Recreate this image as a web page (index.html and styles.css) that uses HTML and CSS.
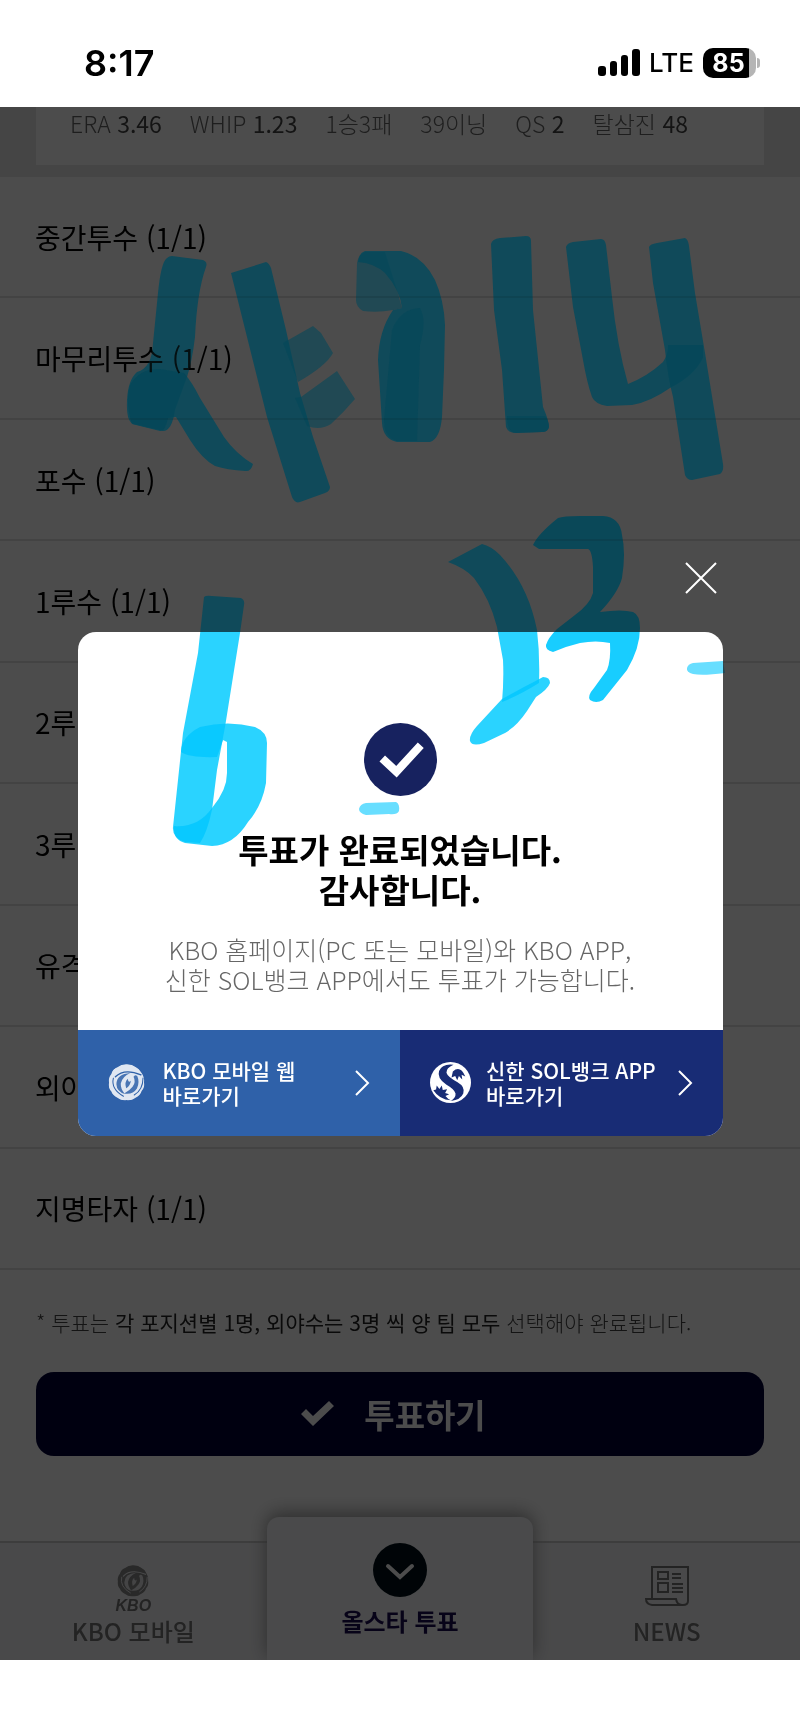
FILE: index.html
```html
<!DOCTYPE html>
<html lang="ko">

<head>
    <meta charset="utf-8">
    <meta name="viewport" content="width=device-width, initial-scale=1">
    <title>올스타 투표</title>
    <link rel="stylesheet" href="styles.css">
</head>

<body>
    <div class="phone">
        <header class="status">
            <span class="clock">8:17</span>
            <div class="status-right">
                <svg class="signal" viewBox="0 0 42 28" aria-hidden="true">
                    <rect x="0" y="17" width="8" height="10" rx="3" />
                    <rect x="12" y="12" width="7" height="15" rx="3" />
                    <rect x="23" y="6" width="7" height="21" rx="3" />
                    <rect x="34" y="0" width="8" height="27" rx="3" />
                </svg>
                <span class="network">LTE</span>
                <span class="battery">85</span>
            </div>
        </header>

        <main class="screen">
            <section class="stats">
                <ul class="stats-box">
                    <li>ERA <b>3.46</b></li>
                    <li>WHIP <b>1.23</b></li>
                    <li>1승3패</li>
                    <li>39이닝</li>
                    <li>QS <b>2</b></li>
                    <li>탈삼진 <b>48</b></li>
                </ul>
            </section>

            <ul class="positions">
                <li>중간투수 (1/1)</li>
                <li>마무리투수 (1/1)</li>
                <li>포수 (1/1)</li>
                <li>1루수 (1/1)</li>
                <li>2루</li>
                <li>3루</li>
                <li>유격</li>
                <li>외야</li>
                <li>지명타자 (1/1)</li>
            </ul>

            <section class="vote">
                <p class="note">* 투표는 <b>각 포지션별 1명, 외야수는 3명 씩 양 팀 모두</b> 선택해야 완료됩니다.</p>
                <button class="vote-button" type="button">
                    <svg viewBox="0 0 36 28" aria-hidden="true">
                        <path d="M1 14 L6 9 L13 16 L29 1 L34 6 L13 26 Z" />
                    </svg>
                    투표하기
                </button>
            </section>

            <nav class="tabs">
                <a class="tab" href="#mobile">
                    <svg class="tab-kbo" viewBox="0 0 110 110" aria-hidden="true">
                        <use href="#kbo-mark" />
                    </svg>
                    <span class="kbo-word">KBO</span>
                    <span class="tab-label">KBO 모바일</span>
                </a>
                <a class="tab tab-active" href="#allstar">
                    <svg class="tab-circle" viewBox="0 0 54 54" aria-hidden="true">
                        <circle cx="27" cy="27" r="27" fill="#001018" />
                        <path d="M15 23 L27 34 L39 23" fill="none" stroke="#fff" stroke-width="4" stroke-linecap="round" />
                    </svg>
                    <span class="tab-label">올스타 투표</span>
                </a>
                <a class="tab" href="#news">
                    <svg class="tab-news" viewBox="0 0 44 40" aria-hidden="true">
                        <path d="M7 32 V1 H43 V35 Q43 39 38 39 H7 Q1 38 1 33 H31 Q32 39 37 39" />
                        <path d="M13 6 h10 v7 h-10 z M13 17 h10 v9 h-10 z M27 8 h9 M27 12 h9 M27 18 h11 M27 22 h11 M27 26 h11" />
                    </svg>
                    <span class="tab-label">NEWS</span>
                </a>
            </nav>

            <div class="overlay">
                <div class="dialog" role="dialog" aria-labelledby="done-title">
                    <button class="close" type="button" aria-label="닫기">
                        <svg viewBox="0 0 32 32" aria-hidden="true">
                            <path d="M1 1 L31 31 M31 1 L1 31" />
                        </svg>
                    </button>
                    <div class="dialog-body">
                        <svg class="done" viewBox="0 0 72 72" aria-hidden="true">
                            <circle cx="36" cy="36" r="36" fill="#17225f" />
                            <path d="M18 35 L32 48 L56 22" fill="none" stroke="#fff" stroke-width="8" />
                        </svg>
                        <h1 id="done-title">투표가 완료되었습니다.<br>감사합니다.</h1>
                        <p>KBO 홈페이지(PC 또는 모바일)와 KBO APP,<br>신한 SOL뱅크 APP에서도 투표가 가능합니다.</p>
                    </div>
                    <div class="links">
                        <a class="link link-kbo" href="#kbo">
                            <svg class="logo" viewBox="0 0 110 110" aria-hidden="true">
                                <use href="#kbo-mark" />
                            </svg>
                            <span>KBO 모바일 웹<br>바로가기</span>
                            <svg class="arrow" viewBox="0 0 16 28" aria-hidden="true">
                                <path d="M2 2 L14 14 L2 26" />
                            </svg>
                        </a>
                        <a class="link link-sol" href="#sol">
                            <svg class="logo logo-sol" viewBox="0 0 122 122" aria-hidden="true">
                                <circle cx="61" cy="61" r="61" fill="#fff" />
                                <g fill="#182c75">
                                    <path d="M70 8 Q36 4 27 27 Q20 48 48 67 Q74 82 76 94 Q77 107 62 116 Q91 113 99 94 Q106 74 82 60 Q52 44 49 32 Q48 17 70 8 Z" />
                                    <path d="M68 28 Q90 8 105 43 L94 38 L96 52 L86 42 L81 54 L75 42 L64 46 Z" />
                                    <path d="M10 84 L18 82 L20 70 L28 80 L35 70 L38 83 L51 81 L45 92 L57 96 L46 101 Q53 110 62 114 Q28 112 10 84 Z" />
                                </g>
                            </svg>
                            <span>신한 SOL뱅크 APP<br>바로가기</span>
                            <svg class="arrow" viewBox="0 0 16 28" aria-hidden="true">
                                <path d="M2 2 L14 14 L2 26" />
                            </svg>
                        </a>
                    </div>
                </div>
            </div>
        </main>

        <!-- marker strokes drawn over the whole screen -->
        <svg class="ink" viewBox="0 0 800 1733" aria-hidden="true">
            <defs>
                <mask id="kbo-cut">
                    <path fill="#fff" d="M55 1 Q72 0 82 9 Q94 14 100 27 Q109 40 107 54 Q110 70 100 80 Q96 94 82 100 Q70 110 55 107 Q40 110 28 100 Q14 94 10 82 Q0 72 3 56 Q0 42 10 30 Q14 14 28 10 Q40 0 55 1 Z" />
                    <g fill="#000">
                        <path d="M66 27 Q26 30 25 60 Q26 82 50 89 Q37 74 38 58 Q42 38 66 27 Z" />
                        <path d="M76 38 Q84 54 73 68 Q64 80 48 88 Q74 92 86 73 Q95 54 87 36 Q80 30 76 38 Z" />
                        <path d="M59 44 Q48 54 54 72 Q66 66 68 50 Q60 58 59 44 Z" />
                    </g>
                    <g fill="none" stroke="#000" stroke-linecap="round">
                        <path d="M22 38 Q48 12 98 32" stroke-width="4" />
                        <path d="M104 42 Q104 76 78 92" stroke-width="3" />
                        <path d="M16 42 Q8 74 46 96" stroke-width="3" />
                    </g>
                </mask>
                <g id="kbo-mark">
                    <circle cx="55" cy="55" r="55" fill="currentColor" mask="url(#kbo-cut)" />
                </g>
                <g id="strokes">
                    <path d="M172 256 L203 260 Q208 262 206 267 Q197 292 195 337 Q192 362 187 377 L175 410 Q172 431 163 431 L133 424 Q126 421 127 400 Q128 380 137 372 Q152 368 153 343 L158 293 Q161 262 167 258 Q169 256 172 256 Z" />
                    <path d="M130 385 Q140 368 160 369 L184 373 Q192 382 200 398 L224 437 Q236 454 253 464 Q251 472 245 471 Q227 470 215 466 Q202 459 190 440 L176 417 L168 418 Q165 432 160 431 L132 424 Q125 402 130 385 Z" />
                    <path d="M231 273 L266 262 Q269 263 271 268 L286 330 L300 393 L313 437 L330 487 Q330 491 325 493 L300 502 Q295 504 292 497 L267 417 L247 337 Z" />
                    <path class="faint" d="M283 343 L313 326 L321 333 L333 353 Q326 366 298 382 Z" />
                    <path class="faint" d="M295 398 L301 397 L337 371 L355 399 Q344 412 331 424 Q320 431 307 426 Z" />
                    <path class="faint" d="M365 252 L385 252 L397 290 L402 308 L393 310 Q378 313 363 311 Q356 307 356 300 L357 263 Q359 253 365 252 Z" />
                    <path d="M365 251 L401 251 Q423 256 435 280 Q444 300 445 325 L444 370 L442 417 Q440 439 430 442 L397 442 Q383 439 382 423 L378 360 Q379 330 393 310 L402 308 Q400 290 385 273 Q374 263 358 262 Q359 253 365 251 Z" />
                    <path class="faint" d="M392 330 Q400 309 420 308 Q427 320 420 345 L417 441 L397 441 Q384 438 384 420 Z" />
                    <path d="M491 244 Q492 239 500 238 L526 236 Q531 236 531 241 L533 310 L543 407 Q549 421 549 427 Q548 432 542 432 L516 433 Q508 433 506 427 L502 370 L494 310 Z" />
                    <path class="faint" d="M507 416 L545 416 Q549 421 549 427 Q548 432 542 432 L516 433 Q507 433 507 416 Z" />
                    <path d="M566 247 Q567 243 573 242 L601 239 Q605 239 606 245 L612 297 Q617 345 628 384 Q648 376 663 362 Q668 355 668 345 L703 345 L703 358 Q694 376 670 388 Q650 402 632 405 L607 406 Q595 404 592 397 Q587 383 583 360 L573 307 Z" />
                    <path d="M649 247 Q650 244 657 243 L685 238 Q688 239 689 246 L695 293 L705 353 L723 464 Q724 471 720 474 L692 480 Q687 480 685 475 L673 397 Q668 378 665 350 L653 283 Z" />

                    <path d="M204 597 Q206 595 212 596 L241 598 Q245 600 244 605 L240 633 L225 727 L217 770 L212 810 Q207 833 200 843 L185 842 Q172 838 173 827 L178 780 L183 733 L198 653 Z" />
                    <path d="M181 752 Q181 737 200 727 Q228 720 255 727 Q267 732 267 743 L266 783 Q262 806 248 822 Q234 845 212 846 L185 843 Q173 840 174 826 Q198 828 212 808 Q227 790 227 773 L227 742 L223 740 L217 757 Q190 758 181 752 Z" />

                    <path d="M448 562 L482 544 Q491 546 500 555 Q528 585 537 630 Q540 655 539 683 Q520 695 502 702 Q504 680 503 660 L497 627 Q490 599 474 578 Q465 568 448 562 Z" />
                    <path d="M502 699 L524 687 Q534 682 543 677 Q550 677 550 683 Q548 689 536 697 L527 711 Q517 726 505 733 L484 743 Q472 747 470 741 Q469 735 477 726 Z" />
                    <path class="strong" d="M533 545 Q538 534 558 518 Q563 516 580 516 L603 516 Q620 517 622 535 Q626 553 622 578 Q618 593 600 612 Q622 609 633 612 Q640 615 640 628 Q640 648 627 670 Q615 685 603 700 Q596 704 590 700 Q587 696 594 688 L607 670 Q611 660 610 643 Q596 640 580 643 Q567 646 553 652 Q545 650 546 645 Q548 638 557 629 L575 615 Q590 604 593 593 L593 567 Q592 550 588 549 L539 549 Z" />
                    <path class="faint" d="M693 663 L723 661 L725 673 Q702 676 693 674 Q686 672 687 668 Q688 664 693 663 Z" />
                    <path class="faint" d="M366 803 L396 802 Q400 804 399 811 Q397 815 389 814 L366 815 Q359 813 359 809 Q360 804 366 803 Z" />
                </g>
            </defs>
            <use href="#strokes" />
        </svg>
        <svg class="ink ink-glow" viewBox="0 0 800 1733" aria-hidden="true">
            <use href="#strokes" />
        </svg>
    </div>
</body>

</html>
```
FILE: styles.css
```css
* {
    margin: 0;
    padding: 0;
    box-sizing: border-box;
}

body {
    background: #fff;
    color: #000;
    font-family: "Noto Sans CJK KR", "Noto Sans", sans-serif;
    font-weight: 300;
}

ul {
    list-style: none;
}

a {
    color: inherit;
    text-decoration: none;
}

button {
    border: none;
    background: none;
    font-family: inherit;
}

.phone {
    position: relative;
    padding-bottom: 73px;
}

/* status bar */
.status {
    display: flex;
    align-items: center;
    justify-content: space-between;
    height: 107px;
    padding: 18px 44px 0 84px;
    font-family: Inter, sans-serif;
}

.clock {
    font-size: 36px;
    font-weight: 600;
}

.status-right {
    display: flex;
    align-items: center;
    gap: 9px;
}

.signal {
    width: 42px;
    height: 28px;
}

.network {
    font-size: 26px;
    font-weight: 500;
}

.battery {
    position: relative;
    width: 53px;
    padding-right: 2px;
    border-radius: 10px;
    background: linear-gradient(90deg, #000 46px, #b5b5b5 46px);
    color: #fff;
    font-size: 25px;
    font-weight: 700;
    line-height: 30px;
    text-align: center;
}

.battery::after {
    content: "";
    position: absolute;
    top: 10px;
    right: -4px;
    width: 3px;
    height: 10px;
    border-radius: 0 3px 3px 0;
    background: #b5b5b5;
}

/* page behind the dialog */
.screen {
    position: relative;
    overflow: hidden;
    background: #fff;
}

.stats {
    padding: 0 36px 12px;
    background: #e6e6e6;
}

.stats-box {
    display: flex;
    gap: 28px;
    padding: 0 34px 26px;
    background: #fff;
    color: #666;
    font-size: 23px;
    line-height: 32px;
    white-space: nowrap;
}

.stats-box b {
    color: #444;
}

.positions {
    display: grid;
    grid-auto-rows: 1fr;
    min-height: 1093px;
}

.positions li {
    display: flex;
    align-items: center;
    padding: 0 35px;
    border-bottom: 2px solid #e2e2e2;
    font-size: 28px;
    font-weight: 400;
}

.vote {
    padding: 36px 36px 85px;
}

.note {
    margin-bottom: 34px;
    color: #444;
    font-size: 21px;
    line-height: 32px;
}

.note b {
    color: #222;
}

.vote-button {
    display: flex;
    align-items: center;
    justify-content: center;
    gap: 28px;
    width: 100%;
    height: 84px;
    padding-right: 14px;
    border-radius: 18px;
    background: #000038;
    color: #fff;
    font-size: 33px;
    font-weight: 700;
}

.vote-button svg {
    width: 36px;
    height: 28px;
    fill: #fff;
}

.tabs {
    display: grid;
    grid-template-columns: repeat(3, 1fr);
    border-top: 2px solid #ccc;
    background: #f5f5f8;
}

.tab {
    display: flex;
    flex-direction: column;
    align-items: center;
    height: 117px;
    padding-top: 22px;
    color: #777;
}

.tab-label {
    font-size: 24px;
    font-weight: 500;
    line-height: 32px;
}

.tab-kbo {
    width: 32px;
    height: 32px;
}

.kbo-word {
    font-family: "Liberation Sans", sans-serif;
    font-size: 16px;
    font-style: italic;
    font-weight: 700;
    line-height: 18px;
}

.tab-active {
    height: 143px;
    margin-top: -26px;
    padding-top: 26px;
    border-radius: 12px 12px 0 0;
    background: #f7f7fa;
    box-shadow: 0 -4px 18px #999;
    color: #1a0a50;
}

.tab-active .tab-label {
    margin-top: 8px;
    font-weight: 700;
}

.tab-circle {
    width: 54px;
    height: 54px;
}

.tab-news {
    width: 44px;
    height: 40px;
    margin: 1px 0 9px;
    fill: none;
    stroke: #777;
    stroke-width: 2;
}

/* dialog */
.overlay {
    position: absolute;
    inset: 0;
    display: flex;
    align-items: center;
    justify-content: center;
    background: rgba(0, 0, 0, 0.7);
}

.dialog {
    position: relative;
    width: calc(100% - 155px);
    border-radius: 18px;
    background: #fff;
}

.close {
    position: absolute;
    top: -70px;
    right: 6px;
    width: 32px;
    height: 32px;
    cursor: pointer;
}

.close svg {
    display: block;
    fill: none;
    stroke: #fff;
    stroke-width: 2;
}

.dialog-body {
    display: flex;
    flex-direction: column;
    align-items: center;
    padding: 91px 20px 36px;
    text-align: center;
}

.done {
    width: 73px;
    height: 73px;
}

.dialog-body h1 {
    margin: 33px 0 25px;
    font-size: 33px;
    font-weight: 700;
    line-height: 40px;
}

.dialog-body p {
    color: #666;
    font-size: 25px;
    line-height: 30px;
}

.links {
    display: grid;
    grid-template-columns: 1fr 1fr;
    overflow: hidden;
    border-radius: 0 0 18px 18px;
}

.link {
    display: flex;
    align-items: center;
    gap: 18px;
    height: 106px;
    padding: 0 30px;
    color: #fff;
    font-size: 21px;
    font-weight: 500;
    line-height: 25px;
    white-space: nowrap;
}

.link-kbo {
    background: #2f61a9;
}

.link-sol {
    background: #182c75;
    gap: 15px;
}

.logo {
    flex: none;
    width: 37px;
    height: 37px;
}

.logo-sol {
    width: 41px;
    height: 41px;
}

.arrow {
    flex: none;
    width: 16px;
    height: 28px;
    margin-left: auto;
    fill: none;
    stroke: #fff;
    stroke-width: 2;
}

/* marker drawing */
.ink {
    position: absolute;
    top: 0;
    left: 0;
    width: 100%;
    pointer-events: none;
    fill: rgb(0, 184, 238);
    fill-opacity: 0.85;
    mix-blend-mode: multiply;
}

.ink .faint {
    fill-opacity: 0.6;
}

.ink .strong {
    fill-opacity: 0.92;
}

.ink-glow {
    fill: rgb(4, 16, 18);
    fill-opacity: 1;
    mix-blend-mode: plus-lighter;
}
```
